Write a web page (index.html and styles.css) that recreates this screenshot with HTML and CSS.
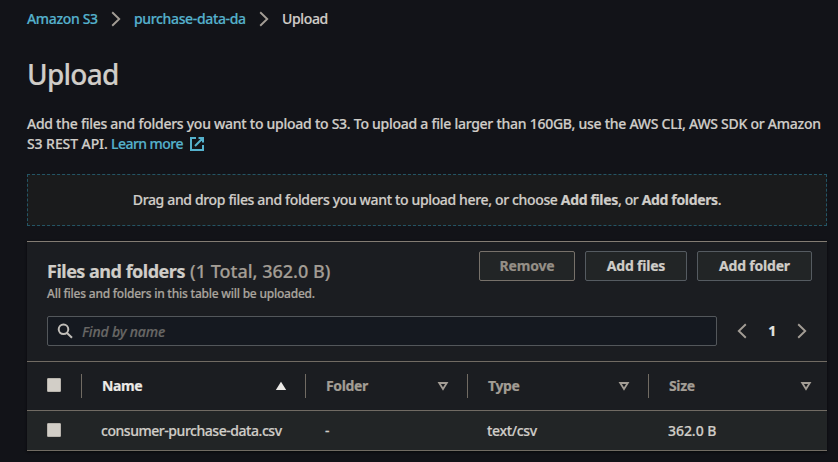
FILE: index.html
```html
<!DOCTYPE html>
<html lang="en">
<head>
<meta charset="utf-8">
<title>Upload</title>
<link rel="stylesheet" href="styles.css">
</head>
<body>
<nav class="crumbs">
  <a class="crumb-root" href="#">Amazon S3</a>
  <svg class="chev" viewBox="0 0 10 16"><path d="M1.2 1.2 8.2 8l-7 6.800"/></svg>
  <a class="crumb-bucket" href="#">purchase-data-da</a>
  <svg class="chev" viewBox="0 0 10 16"><path d="M1.2 1.2 8.2 8l-7 6.800"/></svg>
  <span class="crumb-current">Upload</span>
</nav>
<h1>Upload</h1>
<p class="intro"><span class="intro-first">Add the files and folders you want to upload to S3. To upload a file larger than 160GB, use the AWS CLI, AWS SDK or Amazon</span><br><span class="intro-second">S3 REST API.</span> <a class="learn" href="#">Learn more</a><svg class="external" viewBox="0 0 14 14"><path d="M6 1H1v12h12V8M8.500 1H13v4.500M13 1 5 9"/></svg></p>
<div class="drop"><span>Drag and drop files and folders you want to upload here, or choose <b>Add files</b>, or <b>Add folders</b>.</span></div>
<section class="panel">
  <header class="panel-head">
    <div>
      <h2>Files and folders <span>(1 Total, 362.0 B)</span></h2>
      <p class="sub">All files and folders in this table will be uploaded.</p>
    </div>
    <div class="actions">
      <button class="remove" disabled>Remove</button>
      <button class="add-files">Add files</button>
      <button class="add-folder">Add folder</button>
    </div>
  </header>
  <div class="tools">
    <div class="search">
      <svg viewBox="0 0 16 16"><circle cx="6.500" cy="6.300" r="4.800"/><path d="m10 10 5 4.800"/></svg>
      <span>Find by name</span>
    </div>
    <div class="pager">
      <svg class="chev" viewBox="0 0 10 16"><path d="M8.800 1.200 1.800 8l7 6.800"/></svg>
      <b>1</b>
      <svg class="chev" viewBox="0 0 10 16"><path d="M1.200 1.200 8.200 8l-7 6.800"/></svg>
    </div>
  </div>
  <div class="row head">
    <div class="check"><i></i></div>
    <div class="cell sorted"><span class="h-name">Name</span><svg class="tri" viewBox="0 0 12 10"><path d="M6 .8 11.200 9H.8z" fill="currentColor"/></svg></div>
    <div class="cell"><span class="h-folder">Folder</span><svg class="tri" viewBox="0 0 12 10"><path d="M2.200 2h7.600L6 8z"/></svg></div>
    <div class="cell"><span class="h-type">Type</span><svg class="tri" viewBox="0 0 12 10"><path d="M2.200 2h7.600L6 8z"/></svg></div>
    <div class="cell"><span class="h-size">Size</span><svg class="tri" viewBox="0 0 12 10"><path d="M2.200 2h7.600L6 8z"/></svg></div>
  </div>
  <div class="row data">
    <div class="check"><i></i></div>
    <div class="cell"><span class="d-name">consumer-purchase-data.csv</span></div>
    <div class="cell"><span>-</span></div>
    <div class="cell"><span class="d-type">text/csv</span></div>
    <div class="cell"><span class="d-size">362.0 B</span></div>
  </div>
</section>
</body>
</html>
```
FILE: styles.css
```css
* { box-sizing: border-box; }
body {
  margin: 0;
  padding: 9px 11px 0 27px;
  height: 462px;
  overflow: hidden;
  background: #121318;
  color: #d0cdc8;
  font: 500 14px/20px "Noto Sans", "Open Sans", sans-serif;
  letter-spacing: -0.35px;
  white-space: nowrap;
  -webkit-text-stroke: 0.2px;
}
svg { fill: none; stroke: currentColor; flex: none; }
a { color: #55b1cc; text-decoration: none; }
.crumbs { display: flex; align-items: center; height: 20px; }
.chev { width: 10px; height: 16px; margin: 0 13px; stroke: #a39d95; stroke-width: 1.9; }
.crumb-root { width: 71px; }
.crumb-bucket { width: 112px; }
h1 { margin: 27px 0 0; font-size: 28px; line-height: 36px; font-weight: 500; letter-spacing: -0.75px; }
.intro { margin: 22px 0 0; }
.intro-first { letter-spacing: -0.262px; }
.intro-second { letter-spacing: -0.08px; }
.learn { letter-spacing: -0.55px; margin-left: 0; }
.external { width: 14px; height: 14px; margin-left: 7px; vertical-align: -2px; color: #55b1cc; stroke-width: 2; }
.drop {
  display: flex; align-items: center; justify-content: center;
  width: 800px; height: 52px; margin-top: 20px;
  border: 1px dashed #245565; background: #1a1b1c;
}
.panel { width: 800px; height: 210px; margin-top: 15px; border-top: 1px solid #837c73; background: #1b1d21; box-shadow: 0 1px 2px #08090b; }
.panel-head { display: flex; justify-content: space-between; height: 74px; padding: 9px 15px 0 20px; }
h2 { margin: 9px 0 0; font-size: 18px; line-height: 22px; letter-spacing: -0.5px; }
h2 span { margin-left: 1px; font-weight: 500; letter-spacing: 0; color: #a39d95; }
.sub { margin: 4px 0 0; font-size: 12px; line-height: 16px; letter-spacing: -0.23px; color: #aaa59f; }
.actions { display: flex; gap: 10px; }
button { height: 30px; padding: 0; border: 1px solid #555b61; border-radius: 2px; background: #222526; color: #d0cdc8; font: 700 14px/20px "Noto Sans", sans-serif; letter-spacing: -0.2px; }
.remove { width: 96px; border-color: #77716a; color: #958f87; }
.add-files { width: 102px; }
.add-folder { width: 115px; }
.tools { display: flex; height: 45px; padding-left: 20px; }
.search { display: flex; align-items: center; width: 670px; height: 30px; padding-left: 9px; border: 1px solid #53575b; border-radius: 2px; background: #151920; color: #696866; font-style: italic; letter-spacing: -0.15px; }
.search span { padding-top: 2px; }
.search svg { width: 16px; height: 16px; margin-right: 9px; color: #c0bdb8; stroke-width: 2; }
.pager { display: flex; align-items: center; height: 30px; margin-left: 7px; color: #e6e4e1; }
.pager b { width: 24px; text-align: center; }
.row { display: grid; grid-template-columns: 54px 224px 162px 181px 179px; align-items: center; border-top: 1px solid #716b63; }
.head { height: 49px; color: #a39d95; font-weight: 700; }
.data { height: 41px; border-bottom: 1px solid #716b63; background: #222526; }
.check { padding: 0 0 2px 20px; }
.check i { display: block; width: 14px; height: 14px; border: 1px solid #b8b4ad; border-radius: 1px; background: #d2cec7; }
.cell { display: flex; align-items: center; justify-content: space-between; padding: 0 18px 0 20px; }
.head .cell { height: 24px; border-left: 1px solid #716b63; }
.head .cell:last-child { padding-right: 15px; }
.sorted { color: #eceae7; }
.tri { width: 12px; height: 10px; stroke-width: 1.8; }
.sorted .tri { stroke: none; }
.d-name { letter-spacing: -0.46px; }
.d-size { letter-spacing: -0.05px; }
```
